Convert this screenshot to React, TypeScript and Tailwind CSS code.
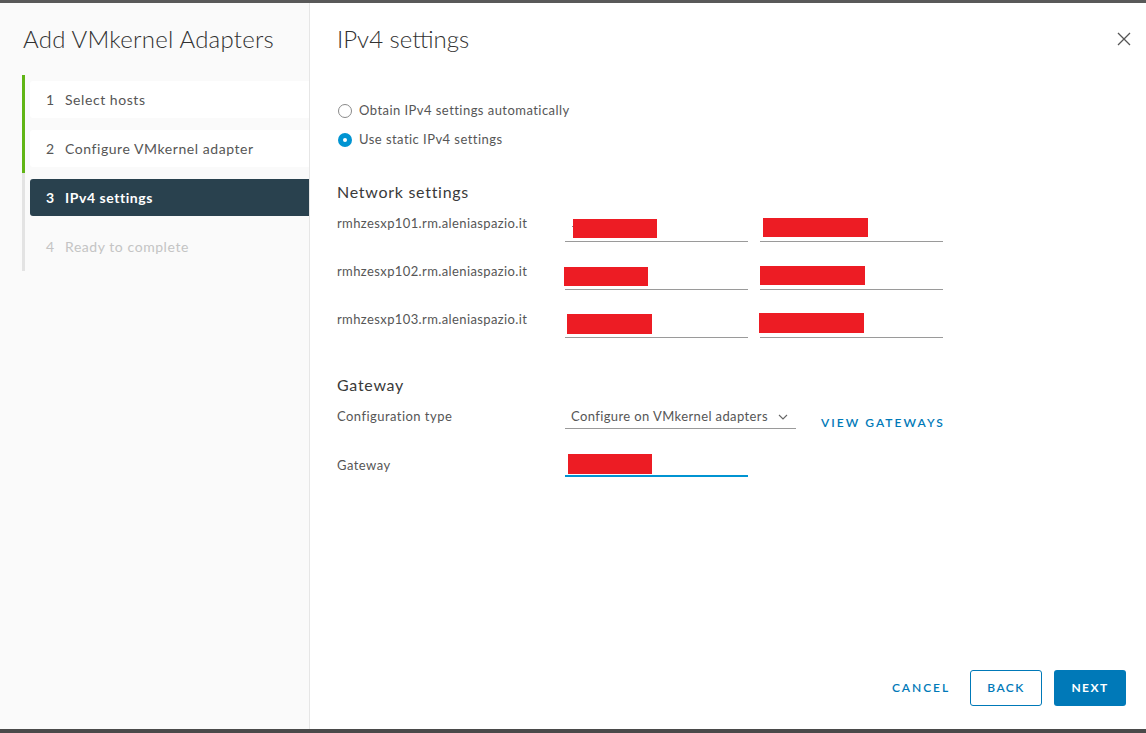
import React from 'react'

const font = { fontFamily: 'Lato, "Open Sans", "Liberation Sans", sans-serif' }

const steps = [
  { n: 1, label: 'Select hosts', state: 'done' },
  { n: 2, label: 'Configure VMkernel adapter', state: 'done' },
  { n: 3, label: 'IPv4 settings', state: 'current' },
  { n: 4, label: 'Ready to complete', state: 'todo' },
]

function Redact({ className }: { className: string }) {
  return <div className={'bg-[#ed1c24] ' + className} />
}

function CloseIcon() {
  return (
    <svg width="16" height="16" viewBox="0 0 16 16" className="text-[#555]">
      <path d="M2 2 L14 14 M14 2 L2 14" stroke="currentColor" strokeWidth="1.3" fill="none" />
    </svg>
  )
}

function Chevron() {
  return (
    <svg width="10" height="6" viewBox="0 0 10 6" className="text-[#666]">
      <path d="M1 1 L5 5 L9 1" stroke="currentColor" strokeWidth="1.1" fill="none" />
    </svg>
  )
}

export default function App() {
  const hosts = [
    {
      name: 'rmhzesxp101.rm.aleniaspazio.it',
      a: 'ml-[-1px] mt-[2px] w-[84px] h-[19px]',
      b: 'ml-[3px] mt-[1px] w-[105px] h-[19px]',
      dash: true,
    },
    {
      name: 'rmhzesxp102.rm.aleniaspazio.it',
      a: 'ml-[-1px] mt-[2px] w-[84px] h-[19px]',
      b: 'ml-[0px] mt-[1px] w-[105px] h-[19px]',
      dash: false,
    },
    {
      name: 'rmhzesxp103.rm.aleniaspazio.it',
      a: 'ml-[2px] mt-[1px] w-[85px] h-[20px]',
      b: 'ml-[-1px] mt-[0px] w-[105px] h-[20px]',
      dash: false,
    },
  ]

  return (
    <div style={font} className="w-[1146px] h-[733px] flex flex-col overflow-hidden bg-white">
      <div className="h-[3px] bg-[#595959] shrink-0" />

      <div className="flex-1 flex min-h-0">
        {/* Sidebar */}
        <aside className="w-[310px] shrink-0 bg-[#fafafa] border-r border-[#e6e6e6] flex flex-col">
          <h1 className="pl-[23px] pt-[20px] text-[24px] leading-[32px] font-light tracking-[0.01em] text-[#313131]">
            Add VMkernel Adapters
          </h1>
          <nav className="mt-[20px] ml-[22px]">
            {steps.map((s) => (
              <div
                key={s.n}
                className={
                  'border-l-[3px] pl-[5px] py-[6px] ' +
                  (s.state === 'done' ? 'border-[#60b515]' : 'border-[#e3e3e3]')
                }
              >
                <div
                  className={
                    'h-[37px] flex items-center pl-[16px] text-[14px] tracking-[0.04em] rounded-l-[3px] ' +
                    (s.state === 'done'
                      ? 'bg-white text-[#565656]'
                      : s.state === 'current'
                        ? 'bg-[#29414e] text-white font-bold tracking-[0.02em]'
                        : 'text-[#c4c4c4]')
                  }
                >
                  <span className="w-[19px]">{s.n}</span>
                  <span>{s.label}</span>
                </div>
              </div>
            ))}
          </nav>
        </aside>

        {/* Main */}
        <main className="flex-1 flex flex-col pl-[27px] pr-[20px]">
          <div className="flex items-start justify-between pt-[20px]">
            <h2 className="text-[24px] leading-[32px] font-light text-[#313131]">IPv4 settings</h2>
            <button className="mt-[8px] mr-[-6px]">
              <CloseIcon />
            </button>
          </div>

          <div className="mt-[46px] flex flex-col gap-[9px] text-[13px] tracking-[0.035em] text-[#565656]">
            <label className="flex items-center h-[20px]">
              <span className="w-[14px] h-[14px] rounded-full border border-[#8a8a8a] bg-white ml-[1px]" />
              <span className="ml-[7px]">Obtain IPv4 settings automatically</span>
            </label>
            <label className="flex items-center h-[20px]">
              <span className="w-[14px] h-[14px] rounded-full bg-[#0094d2] ml-[1px] flex items-center justify-center">
                <span className="w-[4px] h-[4px] rounded-full bg-white" />
              </span>
              <span className="ml-[7px]">Use static IPv4 settings</span>
            </label>
          </div>

          <h3 className="mt-[30px] text-[16px] leading-[24px] tracking-[0.045em] text-[#3a3a3a]">Network settings</h3>

          <div className="mt-[11px] flex flex-col">
            {hosts.map((h) => (
              <div key={h.name} className="h-[48px] flex items-start">
                <div className="w-[228px] text-[13px] leading-[16px] tracking-[0.03em] text-[#565656]">{h.name}</div>
                <div className="mt-[2px] w-[183px] h-[25px] border-b border-[#9a9a9a] flex items-start">
                  {h.dash && <span className="mt-[9px] ml-[7px] w-[2px] h-[1px] bg-[#888]" />}
                  <Redact className={h.a} />
                </div>
                <div className="mt-[2px] ml-[12px] w-[183px] h-[25px] border-b border-[#9a9a9a] flex items-start">
                  <Redact className={h.b} />
                </div>
              </div>
            ))}
          </div>

          <h3 className="mt-[14px] text-[16px] leading-[24px] tracking-[0.045em] text-[#3a3a3a]">Gateway</h3>

          <div className="mt-[8px] flex items-start">
            <div className="w-[228px] mt-[3px] text-[13px] leading-[16px] tracking-[0.035em] text-[#565656]">Configuration type</div>
            <div className="w-[231px] h-[24px] border-b border-[#9a9a9a] flex items-center pl-[6px] pr-[8px] text-[13px] tracking-[0.03em] text-[#565656]">
              <span className="flex-1">Configure on VMkernel adapters</span>
              <Chevron />
            </div>
            <button className="ml-[25px] mt-[10px] text-[12px] leading-[16px] font-semibold tracking-[0.17em] text-[#0079b8]">
              VIEW GATEWAYS
            </button>
          </div>

          <div className="mt-[22px] flex items-start">
            <div className="w-[228px] mt-[4px] text-[13px] leading-[16px] tracking-[0.035em] text-[#565656]">Gateway</div>
            <div className="w-[183px] h-[24px] border-b-2 border-[#0094d2] flex items-start">
              <Redact className="ml-[3px] mt-[1px] w-[84px] h-[20px]" />
            </div>
          </div>

          <div className="mt-auto pb-[23px] flex justify-end items-center gap-[12px]">
            <button className="h-[36px] px-[8px] text-[12px] font-semibold tracking-[0.16em] text-[#0079b8]">
              CANCEL
            </button>
            <button className="h-[36px] w-[72px] rounded-[3px] border border-[#0079b8] bg-white text-[12px] font-semibold tracking-[0.12em] text-[#0079b8]">
              BACK
            </button>
            <button className="h-[36px] w-[72px] rounded-[3px] bg-[#0079b8] text-[12px] font-bold tracking-[0.12em] text-white">
              NEXT
            </button>
          </div>
        </main>
      </div>

      <div className="h-[4px] bg-[#4a4a4a] shrink-0" />
    </div>
  )
}
